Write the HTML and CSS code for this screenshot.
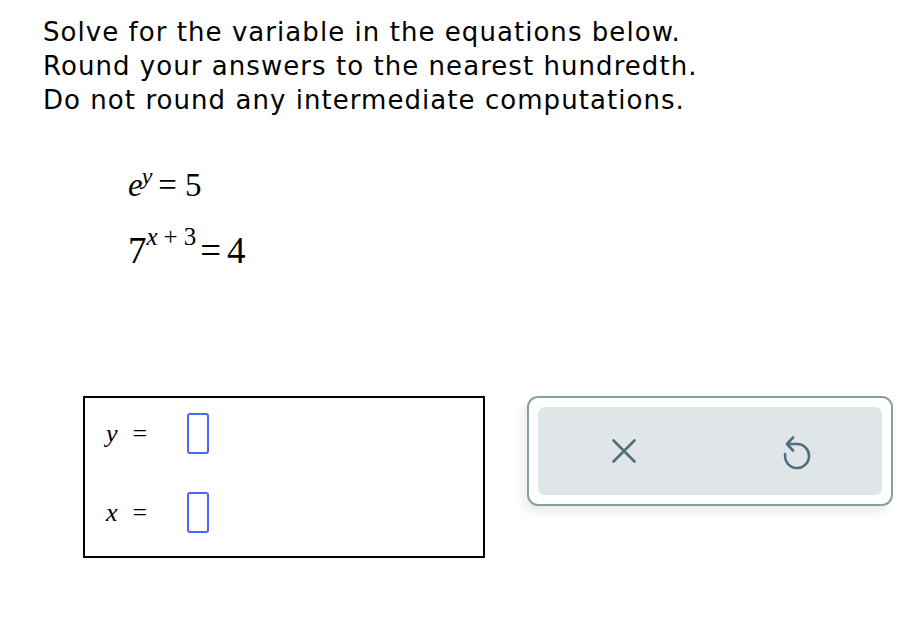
FILE: index.html
```html
<!DOCTYPE html>
<html>
<head>
<meta charset="utf-8">
<link rel="stylesheet" href="styles.css">
</head>
<body>
<div class="page">
  <div class="instructions">
    <div>Solve for the variable in the equations below.</div>
    <div>Round your answers to the nearest hundredth.</div>
    <div>Do not round any intermediate computations.</div>
  </div>
  <div class="equations">
    <div class="eq eq1"><span class="v">e</span><sup class="sup1"><span class="v">y</span></sup><span class="op">=</span>5</div>
    <div class="eq eq2">7<sup class="sup2"><span class="v">x</span><span class="plus">+</span>3</sup><span class="op">=</span>4</div>
  </div>
  <div class="answer-row">
    <div class="answer-box">
      <div class="answer-line"><span class="label"><span class="v">y</span><span class="eqs">=</span></span><span class="input"></span></div>
      <div class="answer-line"><span class="label"><span class="v">x</span><span class="eqs">=</span></span><span class="input"></span></div>
    </div>
    <div class="tools">
      <div class="tools-inner">
        <svg class="icon-x" width="24" height="24" viewBox="0 0 24 24"><path d="M1.5 1.5 L22.5 22.5 M22.5 1.5 L1.5 22.5" stroke="#4f6e7b" stroke-width="2.6" fill="none" stroke-linecap="round"/></svg>
        <svg class="icon-undo" width="30" height="36" viewBox="0 0 30 36"><path d="M14 9 A12 12 0 1 1 2.2 19" stroke="#4f6e7b" stroke-width="2.6" fill="none" stroke-linecap="round"/><path d="M10 2.5 L4 9 L10 15.5" stroke="#4f6e7b" stroke-width="2.6" fill="none" stroke-linecap="round" stroke-linejoin="round"/><path d="M4.5 9 L14 9" stroke="#4f6e7b" stroke-width="2.6" fill="none" stroke-linecap="round"/></svg>
      </div>
    </div>
  </div>
</div>
</body>
</html>
```
FILE: styles.css
```css
html, body {
  margin: 0;
  padding: 0;
  background: #ffffff;
}
.page {
  padding: 15px 0 0 43px;
}
.instructions {
  font-family: "DejaVu Sans", Verdana, sans-serif;
  font-size: 26px;
  letter-spacing: 1.05px;
  line-height: 34px;
  color: #000;
}
.equations {
  margin: 48px 0 0 85px;
  font-family: "Liberation Serif", "Times New Roman", serif;
  font-size: 33px;
  color: #000;
}
.v {
  font-style: italic;
}
.eq {
  line-height: 40px;
}
.eq2 {
  margin-top: 26px;
  font-size: 37px;
}
.sup1 {
  font-size: 24px;
  vertical-align: 12px;
  line-height: 0;
  margin-left: -1px;
}
.sup2 {
  font-size: 25px;
  vertical-align: 18px;
  line-height: 0;
  margin-left: 0;
}
.plus {
  margin: 0 6px;
}
.op {
  margin: 0 8px 0 6px;
}
.eq2 .op {
  margin: 0 6px 0 4px;
}
.answer-row {
  display: flex;
  align-items: flex-start;
  margin: 125px 0 0 40px;
}
.answer-box {
  border: 2px solid #000;
  display: flex;
  flex-direction: column;
  padding: 15px 0 0 21px;
  box-sizing: border-box;
  width: 402px;
  height: 162px;
  gap: 38px;
}
.answer-line {
  display: flex;
  align-items: center;
  height: 41px;
}
.label {
  font-family: "Liberation Serif", "Times New Roman", serif;
  font-size: 26px;
  width: 81px;
  white-space: pre;
}
.eqs {
  margin-left: 15px;
}
.input {
  width: 22px;
  height: 41px;
  box-sizing: border-box;
  border: 2px solid #4a66f6;
  border-radius: 3px;
}
.tools {
  margin-left: 42px;
  width: 366px;
  height: 110px;
  box-sizing: border-box;
  border: 2px solid #8a9ea8;
  border-radius: 11px;
  padding: 9px;
  box-shadow: -4px 6px 10px rgba(0,0,0,0.08);
  background: #fff;
}
.tools-inner {
  height: 100%;
  background: #e0e5e8;
  border-radius: 7px;
  display: flex;
  align-items: center;
  padding-left: 74px;
}
.icon-undo {
  margin-left: 147px;
  margin-top: 4px;
}
```
